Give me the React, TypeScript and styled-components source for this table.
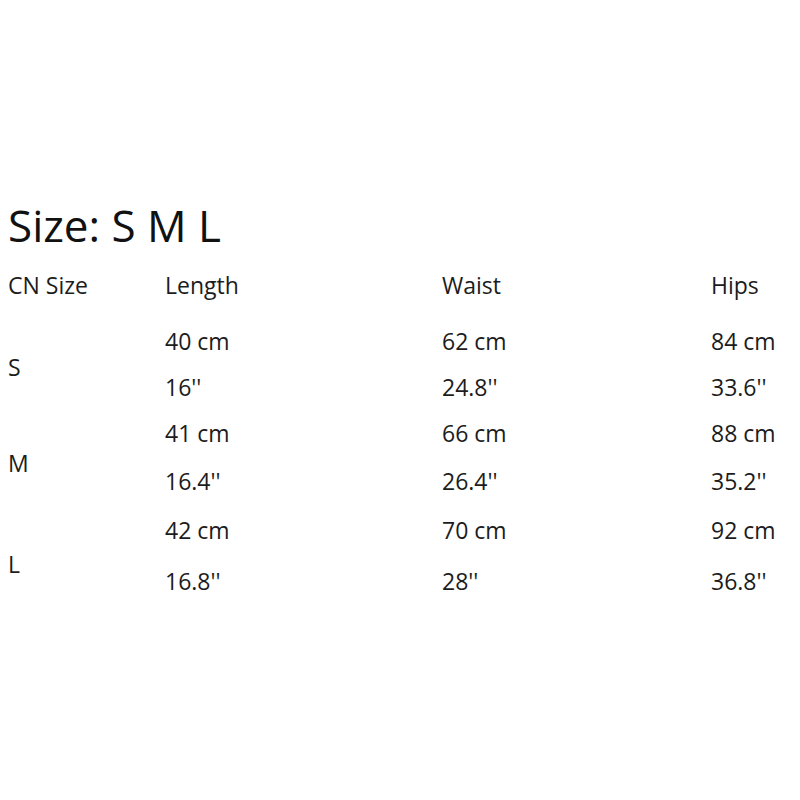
import styled, { createGlobalStyle } from "styled-components"

const GlobalStyle = createGlobalStyle`
  body {
    margin: 0;
    background: #fff;
    font-family: "Open Sans", "Liberation Sans", sans-serif;
    color: #1c1c1c;
  }
`

const Page = styled.div`
  width: 800px;
  height: 800px;
  padding: 199px 0 0 8px;
  box-sizing: border-box;
`

const Title = styled.h1`
  margin: 0;
  font-size: 44px;
  font-weight: 500;
  line-height: 52px;
  color: #111;
`

const Table = styled.div`
  display: grid;
  grid-template-columns: 157px 277px 269px 1fr;
  margin-top: 11px;
  font-size: 23px;
`

const HeadCell = styled.div`
  height: 46px;
  line-height: 46px;
  margin-bottom: 10px;
`

const SizeCell = styled.div<{ $span: number; $shift: number }>`
  grid-row: span ${({ $span }) => $span};
  display: flex;
  align-items: center;
  padding-top: ${({ $shift }) => $shift * 2}px;
`

const Cell = styled.div<{ $h: number }>`
  height: ${({ $h }) => $h}px;
  display: flex;
  align-items: center;
`

const groups = [
  {
    size: "S",
    shift: 3,
    rows: [
      { h: 46, vals: ["40 cm", "62 cm", "84 cm"] },
      { h: 46, vals: ["16''", "24.8''", "33.6''"] },
    ],
  },
  {
    size: "M",
    shift: 5.5,
    rows: [
      { h: 46.5, vals: ["41 cm", "66 cm", "88 cm"] },
      { h: 48.5, vals: ["16.4''", "26.4''", "35.2''"] },
    ],
  },
  {
    size: "L",
    shift: 8,
    rows: [
      { h: 50.5, vals: ["42 cm", "70 cm", "92 cm"] },
      { h: 51, vals: ["16.8''", "28''", "36.8''"] },
    ],
  },
]

const App = () => {
  return (
    <Page>
      <GlobalStyle />
      <Title>Size: S M L</Title>
      <Table>
        {["CN Size", "Length", "Waist", "Hips"].map((h) => (
          <HeadCell key={h}>{h}</HeadCell>
        ))}
        {groups.map((g) => [
          <SizeCell key={g.size} $span={g.rows.length} $shift={g.shift}>
            {g.size}
          </SizeCell>,
          ...g.rows.map((r, ri) =>
            r.vals.map((v, vi) => (
              <Cell key={g.size + ri + vi} $h={r.h}>
                {v}
              </Cell>
            ))
          ),
        ])}
      </Table>
    </Page>
  )
}

export default App
